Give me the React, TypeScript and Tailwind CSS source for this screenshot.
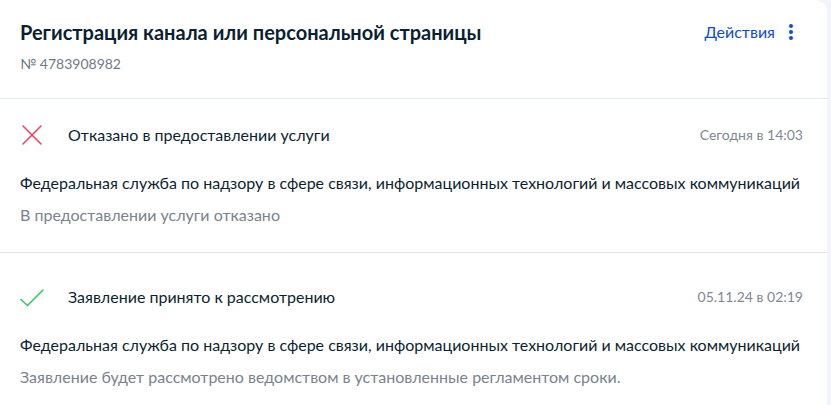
import React from 'react';

interface StatusItem {
  status: 'rejected' | 'accepted';
  title: string;
  date: string;
  org: string;
  note: string;
}

const items: StatusItem[] = [
  {
    status: 'rejected',
    title: 'Отказано в предоставлении услуги',
    date: 'Сегодня в 14:03',
    org: 'Федеральная служба по надзору в сфере связи, информационных технологий и массовых коммуникаций',
    note: 'В предоставлении услуги отказано',
  },
  {
    status: 'accepted',
    title: 'Заявление принято к рассмотрению',
    date: '05.11.24 в 02:19',
    org: 'Федеральная служба по надзору в сфере связи, информационных технологий и массовых коммуникаций',
    note: 'Заявление будет рассмотрено ведомством в установленные регламентом сроки.',
  },
];

const CrossIcon = () => (
  <svg width="24" height="24" viewBox="0 0 24 24" fill="none">
    <path d="M3 3L21 21M21 3L3 21" stroke="#ee3f58" strokeWidth="1.5" strokeLinecap="round" />
  </svg>
);

const CheckIcon = () => (
  <svg width="24" height="24" viewBox="0 0 24 24" fill="none">
    <path d="M1 14.5L7.5 20.5L23 5" stroke="#2ec866" strokeWidth="1.5" strokeLinecap="round" strokeLinejoin="round" />
  </svg>
);

const DotsIcon = () => (
  <svg width="24" height="24" viewBox="0 0 24 24" fill="#0d4cd3">
    <circle cx="12" cy="6" r="2" />
    <circle cx="12" cy="12" r="2" />
    <circle cx="12" cy="18" r="2" />
  </svg>
);

const StatusRow = ({ item, first }: { item: StatusItem; first: boolean }) => (
  <div className={`border-t border-[#e3e8ee] pr-6 pb-[25px] ${first ? 'pt-6' : 'pt-[32px]'}`}>
    <div className="flex items-center pl-5">
      <div className="w-6 h-6 flex items-center justify-center">
        {item.status === 'rejected' ? <CrossIcon /> : <CheckIcon />}
      </div>
      <span className="ml-6 flex-1 text-[16px] leading-6 text-[#0b1f33]">{item.title}</span>
      <span className="text-[14px] leading-5 text-[#7d8894]">{item.date}</span>
    </div>
    <p className="pl-5 mt-6 text-[16px] leading-6 text-[#0b1f33]">{item.org}</p>
    <p className="pl-5 mt-2 text-[16px] leading-6 text-[#78838f]">{item.note}</p>
  </div>
);

export default function App() {
  return (
    <div className="w-[831px] h-[405px] bg-[#f1f4fa] overflow-hidden" style={{ fontFamily: 'Lato, "Noto Sans", sans-serif' }}>
      <div className="w-[827px] h-full bg-white rounded-tr-xl">
        <div className="flex items-start justify-between pl-5 pr-6 pt-[18px] pb-[24px]">
          <div>
            <h1 className="text-[20px] leading-7 font-bold text-[#0b1f33]">
              Регистрация канала или персональной страницы
            </h1>
            <div className="mt-2 text-[14px] leading-5 text-[#6f7a86]">№ 4783908982</div>
          </div>
          <button className="flex items-center gap-1 mt-[2px] text-[16px] leading-6 text-[#0d4cd3]">
            Действия
            <DotsIcon />
          </button>
        </div>
        {items.map((item, i) => (
          <StatusRow key={i} item={item} first={i === 0} />
        ))}
      </div>
    </div>
  );
}
